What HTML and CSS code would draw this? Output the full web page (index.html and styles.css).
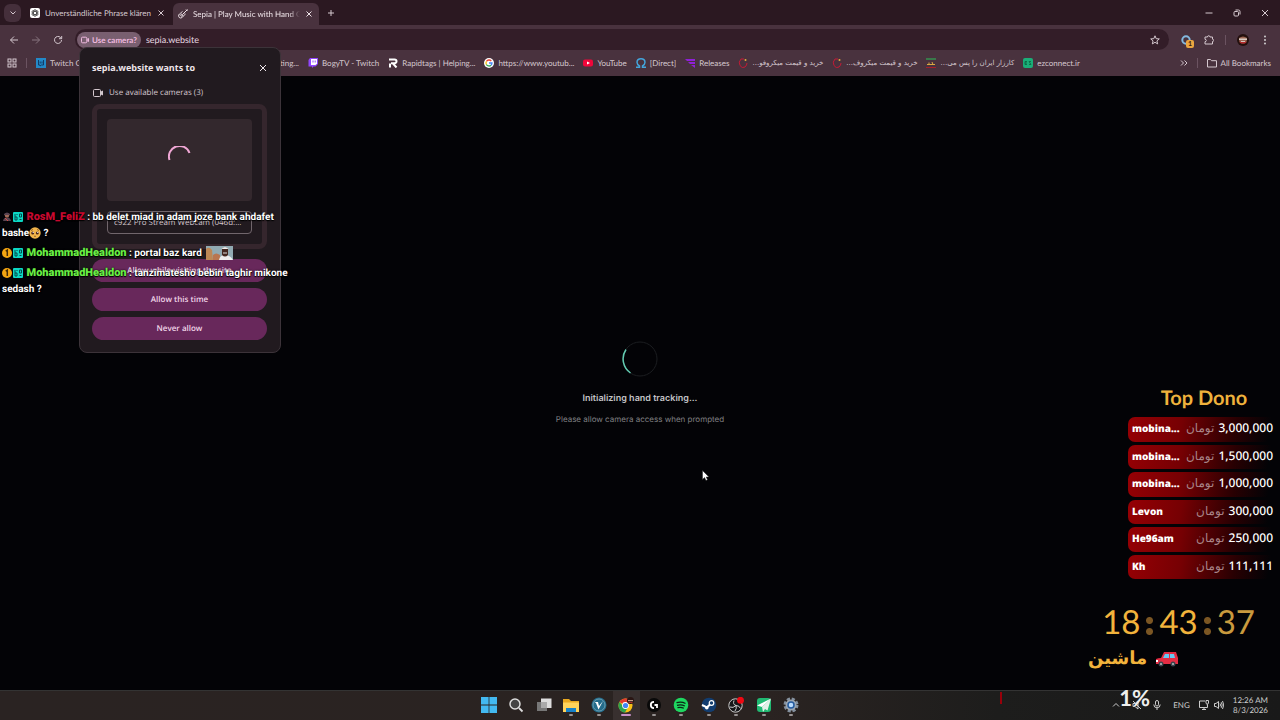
FILE: index.html
```
<!DOCTYPE html>
<html lang="en">
<head>
  <meta charset="UTF-8">
  <title>Sepia | Play Music with Hand Gestures</title>
  <link rel="stylesheet" href="styles.css">
</head>
<body>

  <!-- Tabs -->
  <header class="tabs">
    <button class="tab-search" aria-label="Search tabs"><svg class="ico8" viewBox="0 0 8 8"><path d="M1.5 2.5 4 5l2.500-2.500"/></svg></button>
    <div class="tab">
      <svg class="ico10" viewBox="0 0 10 10"><rect width="10" height="10" rx="2" fill="#fff" stroke="none"/><g stroke="#333" stroke-width=".7"><ellipse cx="5" cy="5" rx="1.600" ry="3.500"/><ellipse cx="5" cy="5" rx="1.600" ry="3.500" transform="rotate(60 5 5)"/><ellipse cx="5" cy="5" rx="1.600" ry="3.500" transform="rotate(120 5 5)"/></g></svg>
      <span>Unverständliche Phrase klären</span>
      <button aria-label="Close tab"><svg class="ico8" viewBox="0 0 8 8"><path d="m1.500 1.500 5 5m0-5-5 5"/></svg></button>
    </div>
    <div class="tab active">
      <svg class="ico10" viewBox="0 0 10 10"><path d="M9.500.5 5 5M8 .5l1.500 1.500M4.500 2.500C3 3 3 4.500 1.500 5c-1.500.8-1 4 1 4 2.500 0 2-2 3.500-2.500 1-.5 1-1 1-2"/><circle cx="3.700" cy="6.200" r="1"/></svg>
      <span class="fade">Sepia | Play Music with Hand Ge</span>
      <button aria-label="Close tab"><svg class="ico8" viewBox="0 0 8 8"><path d="m1.500 1.500 5 5m0-5-5 5"/></svg></button>
    </div>
    <button class="new-tab" aria-label="New tab"><svg class="ico8" viewBox="0 0 8 8"><path d="M4 1v6M1 4h6"/></svg></button>
    <div class="window-buttons">
      <button aria-label="Minimize"><svg class="ico8" viewBox="0 0 8 8"><path d="M.5 4h7"/></svg></button>
      <button aria-label="Restore"><svg class="ico8" viewBox="0 0 8 8"><rect x="1" y="2.500" width="4.500" height="4.500" rx="1"/><path d="M2.500 1h3Q7 1 7 2.500v3"/></svg></button>
      <button aria-label="Close"><svg class="ico8" viewBox="0 0 8 8"><path d="m1 1 6 6m0-6-6 6"/></svg></button>
    </div>
  </header>

  <!-- Toolbar -->
  <nav class="toolbar">
    <button aria-label="Back"><svg class="ico10" viewBox="0 0 10 10"><path d="M9 5H1.500M5 1.500 1.500 5 5 8.500"/></svg></button>
    <button class="dim" aria-label="Forward"><svg class="ico10" viewBox="0 0 10 10"><path d="M1 5h7.500M5 1.500 8.500 5 5 8.500"/></svg></button>
    <button aria-label="Reload"><svg class="ico10" viewBox="0 0 10 10"><path d="M8.500 5A3.500 3.500 0 1 1 7.400 2.400L8.500 3.500M8.700 1v2.700H6"/></svg></button>
    <div class="address">
      <button class="chip"><svg class="ico8" viewBox="0 0 8 8"><rect x=".5" y="1.200" width="5.300" height="5.600" rx="1"/><path d="m6 3.500 1.500-1v3L6 4.500"/></svg>Use camera?</button>
      <input type="text" value="sepia.website" aria-label="Address">
      <button aria-label="Bookmark this tab"><svg class="ico10" viewBox="0 0 10 10"><path d="m5 .8 1.200 2.900 3.100.2-2.400 2 .8 3L5 7.300 2.300 8.900l.8-3-2.400-2 3.100-.2z"/></svg></button>
    </div>
    <div class="extensions">
      <button class="ext" aria-label="Extension"><svg class="ico10" viewBox="0 0 10 10"><circle cx="5" cy="5" r="3.700" stroke="#83b9df" stroke-width="2"/></svg><b>1</b></button>
      <button aria-label="Extensions"><svg class="ico10" viewBox="0 0 10 10"><path d="M1 2h2.500q0-1.300 1.200-1.300T6 2h2.500v2.200q1.200.1 1.200 1.200T8.500 6.500V9H1V6.700q1.300 0 1.300-1.200T1 4.300z"/></svg></button>
      <i class="rule"></i>
      <button class="profile" aria-label="Profile"><svg viewBox="0 0 12 12"><circle cx="6" cy="6" r="6" fill="#23100e"/><path d="M2 4q4-3 8 0l-.5 4q-3.500 3-7 0z" fill="#9a6450"/><path d="M2 4.500h8v1.500H2z" fill="#d9cbc2"/><path d="M2.500 7.500q3.500 1 7 0L9 9q-3 1-6 0z" fill="#b52a2c"/><path d="M4 7h4v.7H4z" fill="#eee"/></svg></button>
      <button aria-label="Menu"><svg class="ico10" viewBox="0 0 10 10"><g fill="#ddd" stroke="none"><circle cx="5" cy="1.500" r=".9"/><circle cx="5" cy="5" r=".9"/><circle cx="5" cy="8.500" r=".9"/></g></svg></button>
    </div>
  </nav>

  <!-- Bookmarks -->
  <nav class="bookmarks">
    <button aria-label="Apps"><svg class="ico10" viewBox="0 0 10 10"><rect x="1" y="1" width="3" height="3"/><rect x="6" y="1" width="3" height="3"/><rect x="1" y="6" width="3" height="3"/><rect x="6" y="6" width="3" height="3"/></svg></button>
    <i class="rule"></i>
    <div class="links">
      <a class="wide" href="#"><svg class="ico10" viewBox="0 0 10 10"><rect width="10" height="10" fill="#2389c8" stroke="none"/><path d="M2.500 2v5h1.500v1L5.500 7h2V2M4.200 3.500v2M6 3.500v2" stroke="#123d68"/></svg><span>Twitch Creator Dash</span></a>
      <a class="wide" href="#"><svg class="ico10" viewBox="0 0 10 10"><circle cx="5" cy="5" r="4"/></svg><span>Stream Alert Setting...</span></a>
      <a href="#"><svg class="ico10" viewBox="0 0 10 10"><path d="M2 0h8v6L7.500 8.500H5.500L4 10V8.500H.5V2z" fill="#9146ff" stroke="none"/><path d="M3 1h6v4.500L7.500 7H3z" fill="#fff" stroke="none"/><path d="M5 2.500v2M7.200 2.500v2" stroke="#9146ff"/></svg><span>BogyTV - Twitch</span></a>
      <a href="#"><svg class="ico10" viewBox="0 0 10 10"><path d="M1 1.500h5.500q2 0 2 1.800T6.500 5.200H3M2 9.500V5.500M5 5.500l3.500 4" stroke="#fff" stroke-width="2"/></svg><span>Rapidtags | Helping...</span></a>
      <a href="#"><svg class="ico10" viewBox="0 0 10 10"><circle cx="5" cy="5" r="5" fill="#fff" stroke="none"/><g stroke-width="1.300"><path d="M2.500 3.400A3 3 0 0 1 7.300 3" stroke="#ea4335"/><path d="M2.500 3.300a3 3 0 0 0 0 3.400" stroke="#fbbc05"/><path d="M2.400 6.500A3 3 0 0 0 7 7.200" stroke="#34a853"/><path d="M5 5h3q0 1.500-1 2.300" stroke="#4285f4"/></g></svg><span>https://www.youtub...</span></a>
      <a href="#"><svg class="ico10" viewBox="0 0 10 10"><rect y="1.500" width="10" height="7" rx="2" fill="#f0063a" stroke="none"/><path d="m4 3.500 3 1.500-3 1.500z" fill="#fff" stroke="none"/></svg><span>YouTube</span></a>
      <a href="#"><svg class="ico10" viewBox="0 0 10 10"><path d="M0 9.200h3.500V8Q1 6.500 1 4.300 1.200.8 5 .8t4 3.500Q9 6.500 6.500 8v1.200H10" stroke="#43a5dc" stroke-width="1.500"/></svg><span>[Direct]</span></a>
      <a href="#"><svg class="ico10" viewBox="0 0 10 10"><path d="M0 1h10v2H2zM3 4h7v2H5zM6 7h4v3z" fill="#8f20d8" stroke="none"/></svg><span>Releases</span></a>
      <a href="#"><svg class="ico10" viewBox="0 0 10 10"><path d="M6 1H3Q0 4 2 7.500T7 9q2-2 2-4" stroke="#c41a35"/><circle cx="7.500" cy="2" r="1" fill="#e8ad3d" stroke="none"/></svg><span class="fa" dir="rtl">خرید و قیمت میکروفو...</span></a>
      <a href="#"><svg class="ico10" viewBox="0 0 10 10"><path d="M6 1H3Q0 4 2 7.500T7 9q2-2 2-4" stroke="#c41a35"/><circle cx="7.500" cy="2" r="1" fill="#e8ad3d" stroke="none"/></svg><span class="fa" dir="rtl">خرید و قیمت میکروف...</span></a>
      <a href="#"><svg class="ico10" viewBox="0 0 10 10"><path d="M0 0h10v2H0z" fill="#39784a" stroke="none"/><path d="M0 9h10v1H0z" fill="#a51f2c" stroke="none"/><path d="M1 6.500h8M3 4.500v2M6 4l1 2.500" stroke="#d9a941"/></svg><span class="fa" dir="rtl">کارزار ایران را پس می...</span></a>
      <a href="#"><svg class="ico10" viewBox="0 0 10 10"><rect width="10" height="10" rx="2" fill="#1aae78" stroke="none"/><path d="M4 3.500H2v3h2M2 5h2M8 3.500H6l2 3H6" stroke="#08613f" stroke-width=".8"/></svg><span>ezconnect.ir</span></a>
    </div>
    <button aria-label="More bookmarks"><svg class="ico8" viewBox="0 0 8 8"><path d="m1 1.500 2.500 2.500L1 6.500m3.500-5L7 4 4.500 6.500"/></svg></button>
    <i class="rule"></i>
    <a href="#"><svg class="ico10" viewBox="0 0 10 10"><path d="M.5 8V1.500h3l1 1.200h5V9h-9z"/></svg><span>All Bookmarks</span></a>
  </nav>

  <!-- Page -->
  <main class="page">
    <svg class="loader" viewBox="0 0 36 36"><circle cx="18" cy="18" r="17" stroke="#1b1d20"/><path d="M4 8.500A17 17 0 0 0 8.500 32" stroke="#63cbb1" stroke-width="1.500"/></svg>
    <h1>Initializing hand tracking...</h1>
    <p>Please allow camera access when prompted</p>
  </main>

  <!-- Taskbar -->
  <footer class="taskbar">
    <div class="apps">
      <button aria-label="Start"><svg viewBox="0 0 16 16"><path d="M0 0h7.600v7.600H0zM8.400 0H16v7.600H8.400zM0 8.400h7.600V16H0zM8.400 8.400H16V16H8.400z" fill="#43b9f0"/></svg></button>
      <button aria-label="Search"><svg viewBox="0 0 16 16"><circle cx="7" cy="7" r="5" fill="#444" stroke="#ddd" stroke-width="1.500"/><path d="m11 11 3.500 3.500" stroke="#ddd" stroke-width="1.800"/></svg></button>
      <button aria-label="Task view"><svg viewBox="0 0 16 16"><path d="M1 5h10v9H1z" fill="#777"/><path d="M5 1.500h10.500V11H5z" fill="#ddd"/><path d="M5 5h6v6H5z" fill="#aaa"/></svg></button>
      <button class="open" aria-label="File Explorer"><svg viewBox="0 0 16 16"><path d="M0 2h6l2 2h8v11H0z" fill="#e9a820"/><path d="M0 5.500h16V15H0z" fill="#ffd35b"/><path d="M3 11h10v4H3z" fill="#1782c9"/></svg></button>
      <button class="open" aria-label="V client"><svg viewBox="0 0 16 16"><circle cx="8" cy="8" r="7.500" fill="#246c8b"/><circle cx="8" cy="8" r="6" stroke="#82afbf" stroke-width=".7"/><path d="M3.500 5H7L8 9l4-5-4.500 8.500L5 6z" fill="#fff"/></svg></button>
      <button class="open current" aria-label="Chrome"><svg viewBox="0 0 16 16"><circle cx="7.500" cy="8.500" r="7" fill="#fbc116"/><path d="M7.500 8.500 1.400 5A7 7 0 0 1 13.600 5z" fill="#e33b2e"/><path d="M1.400 5A7 7 0 0 0 7 15.500L10 10 5 9z" fill="#2da44e"/><circle cx="7.500" cy="8.500" r="3.400" fill="#fff"/><circle cx="7.500" cy="8.500" r="2.600" fill="#4285f4"/><circle cx="12.500" cy="3.500" r="3.500" fill="#2a1614"/><path d="M10 3h5v1.200h-5z" fill="#c79a86"/><path d="M10.500 5h4v.9h-4z" fill="#b33"/></svg></button>
      <button class="open" aria-label="G Hub"><svg viewBox="0 0 16 16"><circle cx="8" cy="8" r="7" fill="#090909"/><path d="M8 4.800a3.200 3.200 0 1 0 0 6.400M8.500 8H11v3" stroke="#fff" stroke-width="1.800"/></svg></button>
      <button class="open" aria-label="Spotify"><svg viewBox="0 0 16 16"><circle cx="8" cy="8" r="7.300" fill="#1ed760"/><path d="M3.500 5.700q5-1.500 9 .8M4 8.300q4.200-1.200 7.800.7M4.500 10.700q3.500-.9 6.300.6" stroke="#0b2413" stroke-width="1.300"/></svg></button>
      <button class="open" aria-label="Steam"><svg viewBox="0 0 16 16"><circle cx="8" cy="8" r="7.300" fill="#123d70"/><circle cx="10.500" cy="6" r="2.300" stroke="#fff" stroke-width="1.200"/><path d="m1 8 5 2.300L9 7.500" stroke="#fff" stroke-width="2"/><circle cx="5.800" cy="10.800" r="1.800" fill="#fff"/></svg></button>
      <button class="open" aria-label="OBS"><svg viewBox="0 0 16 16"><circle cx="7.500" cy="8.500" r="6.700" fill="#171719" stroke="#ccc"/><path d="M6 3.500q-1.500 4 2 5 3.500 0 4.500 3M8 8.500q-3 3-6 1.500M8 8.500q1 3-1 5.500" stroke="#ccc"/><circle cx="12.500" cy="3.300" r="3.500" fill="#f00812"/></svg></button>
      <button class="open" aria-label="Send"><svg viewBox="0 0 16 16"><rect x="1" y="1" width="14" height="14" rx="3" fill="#20b972"/><path d="M15 1.500 1 8.500l5 1.500z" fill="#fff"/><path d="m15 1.500-9 8.500 1 5 2-3 2.500 1.500z" fill="#e3f0e8"/></svg></button>
      <button class="open" aria-label="Settings"><svg viewBox="0 0 16 16"><circle cx="8" cy="8" r="6" stroke="#84909d" stroke-width="3" stroke-dasharray="3 1.712"/><circle cx="8" cy="8" r="5.500" fill="#9aa5b1"/><circle cx="8" cy="8" r="3" fill="#b9dcff" stroke="#245b9f" stroke-width="1.500"/></svg></button>
    </div>
    <div class="tray">
      <button aria-label="Hidden icons"><svg class="ico8" viewBox="0 0 8 8"><path d="m1 5.500 3-3 3 3"/></svg></button>
      <svg class="ico10 muted" viewBox="0 0 10 10"><path d="M1 3.500h2L6 1v8L3 6.500H1zM1 1l8 8"/></svg>
      <svg class="ico10 mic" viewBox="0 0 10 10"><rect x="3.500" y=".5" width="3" height="5.500" rx="1.500"/><path d="M1.800 4.500q0 3.300 3.200 3.300t3.200-3.300M5 8v2"/></svg>
      <span class="lang">ENG</span>
      <svg class="ico10" viewBox="0 0 10 10"><path d="M6 1H.5v6.500h8V5M3 9.500h4M5 7.500v2M7 .5h2.500V3q0 1-1.200 1T7 3zM8.300 4v1.500"/></svg>
      <svg class="ico10" viewBox="0 0 10 10"><path d="M.5 3.500H2L4.500 1.500v7L2 6.500H.5zM6 3.500q1 1.500 0 3M7.200 2.200q2 2.800 0 5.600M8.500 1q2.500 4 0 8"/></svg>
      <time>12:26 AM<br>8/3/2026</time>
    </div>
  </footer>

  <!-- Camera permission -->
  <form class="permission">
    <div class="permission-head">
      <h2>sepia.website wants to</h2>
      <button type="button" class="close" aria-label="Close"><svg class="ico8" viewBox="0 0 8 8"><path d="m1 1 6 6m0-6-6 6"/></svg></button>
    </div>
    <label for="camera"><svg class="ico10" viewBox="0 0 10 10"><rect x=".5" y="1.500" width="7" height="7" rx="1"/><path d="m7.500 4.500 2-1.500v4l-2-1.500" fill="#ccc"/></svg>Use available cameras (3)</label>
    <div class="camera">
      <div class="preview"><svg viewBox="0 0 24 24"><path d="M1.500 14A10.500 10.500 0 0 1 21.500 7" stroke="#f0a7d5" stroke-width="2"/></svg></div>
      <select id="camera"><option>c922 Pro Stream Webcam (046d:...</option></select>
    </div>
    <button type="button">Allow while visiting the site</button>
    <button type="button">Allow this time</button>
    <button type="button">Never allow</button>
  </form>

  <!-- Stream chat -->
  <section class="chat">
    <p><svg class="badge" viewBox="0 0 10 10"><circle cx="5" cy="3.500" r="2.200" fill="#a26b58"/><path d="M2 2q3-3 6 0v1H2zM1 9q1-4 4-3 3-1 4 3z" fill="#594451"/><path d="m3 6 3 3" stroke="#d34a45"/></svg><svg class="badge" viewBox="0 0 10 10"><rect width="10" height="10" rx="1" fill="#0bd8c4"/><path d="M2 2v6h2V5H2M4 2v1M6.500 2v3h2V2zM6.500 7.500h2" stroke="#064a4d"/></svg> <b class="red">RosM_FeliZ</b> : bb delet miad in adam joze bank ahdafet bashe<svg class="emoji" viewBox="0 0 12 12"><circle cx="6" cy="6" r="5.700" fill="#f3b64b"/><circle cx="3.700" cy="6" r="1.500" fill="#4b281d"/><circle cx="8.300" cy="6" r="1.500" fill="#4b281d"/><circle cx="4.200" cy="5.400" r=".6" fill="#fff"/><circle cx="8.800" cy="5.400" r=".6" fill="#fff"/><path d="m2 3.500 2-1m6 1-2-1M5 9.500q1-1 2 0" stroke="#68401c" stroke-width=".7"/></svg> ?</p>
    <p><svg class="badge" viewBox="0 0 10 10"><circle cx="5" cy="5" r="5" fill="#f3a512"/><path d="M3.700 3.200 5.300 2.200V8" stroke="#442b05" stroke-width="1.500"/></svg><svg class="badge" viewBox="0 0 10 10"><rect width="10" height="10" rx="1" fill="#0bd8c4"/><path d="M2 2v6h2V5H2M4 2v1M6.500 2v3h2V2zM6.500 7.500h2" stroke="#064a4d"/></svg> <b class="green">MohammadHealdon</b> : portal baz kard <svg class="emote" viewBox="0 0 27 14"><path d="M0 0h27v14H0z" fill="#91aab2"/><path d="M0 3q3-3 6 1l1 10H0z" fill="#bd8755"/><path d="M7 9q3-3 7 0v5H7z" fill="#b97650"/><path d="M13 14q1-5 6-5t8 5z" fill="#eee"/><path d="M16 3q3-4 6 0v6q-3 3-6 0z" fill="#442820"/><path d="M15.500 3q3.500-4 7 0z" fill="#eee"/><path d="M17 7h4" stroke="#ddd"/></svg></p>
    <p><svg class="badge" viewBox="0 0 10 10"><circle cx="5" cy="5" r="5" fill="#f3a512"/><path d="M3.700 3.200 5.300 2.200V8" stroke="#442b05" stroke-width="1.500"/></svg><svg class="badge" viewBox="0 0 10 10"><rect width="10" height="10" rx="1" fill="#0bd8c4"/><path d="M2 2v6h2V5H2M4 2v1M6.500 2v3h2V2zM6.500 7.500h2" stroke="#064a4d"/></svg> <b class="green">MohammadHealdon</b> : tanzimatesho bebin taghir mikone sedash ?</p>
  </section>

  <!-- Donations and timer -->
  <aside class="dono">
    <h2>Top Dono</h2>
    <ol>
      <li><b>mobina...</b><span>تومان</span><em>3,000,000</em></li>
      <li><b>mobina...</b><span>تومان</span><em>1,500,000</em></li>
      <li><b>mobina...</b><span>تومان</span><em>1,000,000</em></li>
      <li><b>Levon</b><span>تومان</span><em>300,000</em></li>
      <li><b>He96am</b><span>تومان</span><em>250,000</em></li>
      <li><b>Kh</b><span>تومان</span><em>111,111</em></li>
    </ol>
  </aside>
  <aside class="timer">
    <div class="clock"><span>18</span><i></i><span>43</span><i></i><span>37</span></div>
    <div class="goal"><span>ماشین</span><svg viewBox="0 0 24 16"><path d="M1 8q2-1 5-1l3-6h12l2 6v6H1z" fill="#e32c43"/><path d="m8 7 2-4h4v4zM15 3h4l1 4h-5z" fill="#67c8f2"/><circle cx="6" cy="13" r="2.500" fill="#39444e"/><circle cx="18" cy="13" r="2.500" fill="#39444e"/><circle cx="6" cy="13" r="1" fill="#bbb"/><circle cx="18" cy="13" r="1" fill="#bbb"/><path d="M1 9h2v2H1z" fill="#fff"/></svg></div>
  </aside>
  <div class="progress"><i></i><span>1%</span></div>

  <svg class="cursor" viewBox="0 0 8 12"><path d="M.5.500v9l2-2 1.500 3 1.500-.7L4.200 7H7z" fill="#fff" stroke="#222" stroke-width=".5"/></svg>

</body>
</html>
```
FILE: styles.css
```
* {
  box-sizing: border-box;
}

body {
  margin: 0;
  height: 100vh;
  display: flex;
  flex-direction: column;
  position: relative;
  overflow: hidden;
  background: #030306;
  color: #d5c8cf;
  font: 9px/12px Lato, "DejaVu Sans", sans-serif;
  text-rendering: geometricPrecision;
}

h1, h2, p, ol {
  margin: 0;
  padding: 0;
}

button, input, select {
  font: inherit;
  color: inherit;
  background: none;
  border: 0;
  padding: 0;
  text-rendering: inherit;
}

a {
  color: inherit;
  text-decoration: none;
}

svg {
  fill: none;
  flex: none;
}

.ico8 {
  width: 8px;
  height: 8px;
  stroke: currentColor;
  display: block;
}

.ico10 {
  width: 10px;
  height: 10px;
  stroke: currentColor;
  display: block;
}

.rule {
  width: 1px;
  height: 10px;
  background: #6b5361;
}

/* tabs */
.tabs {
  height: 25px;
  flex: none;
  display: flex;
  align-items: center;
  padding-left: 4px;
  background: #2b1821;
}

.tab-search {
  width: 17px;
  height: 18px;
  margin-right: 4px;
  border-radius: 6px;
  background: #452f3b;
  display: grid;
  place-items: center;
}

.tab {
  width: 148px;
  height: 22px;
  display: flex;
  align-items: center;
  gap: 5px;
  padding: 0 8px 0 5px;
  font-size: 8px;
  white-space: nowrap;
}

.tab span {
  flex: 1;
  overflow: hidden;
}

.tab.active {
  width: 146px;
  align-self: flex-end;
  padding-right: 6px;
  background: #49323e;
  border-radius: 6px 6px 0 0;
  color: #eee3e8;
}

.tab .fade {
  mask-image: linear-gradient(90deg, #000 90%, transparent);
}

.new-tab {
  margin-left: 8px;
}

.window-buttons {
  margin-left: auto;
  display: flex;
  gap: 20px;
  padding-right: 11px;
}

/* toolbar */
.toolbar {
  height: 27px;
  flex: none;
  display: flex;
  align-items: center;
  gap: 12px;
  padding: 2px 10px 0 9px;
  background: #49323e;
}

.dim {
  opacity: .45;
}

.address {
  flex: 1;
  height: 21px;
  display: flex;
  align-items: center;
  gap: 5px;
  padding: 0 9px 0 2px;
  border-radius: 11px;
  background: #331d28;
}

.address input {
  flex: 1;
  min-width: 0;
  outline: none;
  color: #e6d9e0;
}

.chip {
  height: 16px;
  display: flex;
  align-items: center;
  gap: 3px;
  padding: 0 4px;
  border-radius: 8px;
  background: #795f70;
  color: #efb9df;
  font-size: 8px;
  font-weight: 700;
}

.extensions {
  display: flex;
  align-items: center;
  gap: 11px;
}

.ext {
  position: relative;
  margin-right: 2px;
}

.ext b {
  position: absolute;
  left: 5px;
  top: 5px;
  width: 8px;
  height: 8px;
  border-radius: 2px;
  background: #eba640;
  color: #38200d;
  font-size: 7px;
  line-height: 8px;
}

.profile svg {
  width: 12px;
  height: 12px;
  display: block;
}

/* bookmarks */
.bookmarks {
  height: 24px;
  flex: none;
  display: flex;
  align-items: center;
  gap: 9px;
  padding: 0 9px 2px 7px;
  background: #49323e;
  font-size: 8px;
  white-space: nowrap;
}

.bookmarks a {
  display: flex;
  align-items: center;
  gap: 4px;
}

.bookmarks .fa {
  font-family: "DejaVu Sans", sans-serif;
  font-size: 7px;
}

.links {
  flex: 1;
  display: flex;
  gap: 9px;
  overflow: hidden;
}

.links .wide {
  width: 127px;
  justify-content: space-between;
}

.links .wide:first-child {
  justify-content: flex-start;
}

/* page */
.page {
  flex: 1;
  display: flex;
  flex-direction: column;
  align-items: center;
  justify-content: center;
  padding-top: 1px;
  font-family: Inter, sans-serif;
}

.loader {
  width: 36px;
  height: 36px;
  margin-bottom: 14px;
}

.page h1 {
  font-size: 9px;
  line-height: 16px;
  font-weight: 600;
  color: #c2c2c5;
}

.page p {
  margin-top: 4px;
  font-size: 8px;
  line-height: 16px;
  color: #818184;
}

/* taskbar */
.taskbar {
  height: 30px;
  flex: none;
  position: relative;
  display: flex;
  justify-content: center;
  background: linear-gradient(90deg, #2a2322, #2a2321 60%, #1d1d1c 78%, #191919);
  border-top: 1px solid #333;
}

.apps {
  width: 330px;
  display: grid;
  grid-template-columns: repeat(12, 1fr);
}

.apps button {
  display: flex;
  flex-direction: column;
  align-items: center;
  padding-top: 6px;
}

.apps svg {
  width: 16px;
  height: 16px;
}

.apps .open::after {
  content: "";
  width: 4px;
  height: 2px;
  margin-top: 1px;
  border-radius: 1px;
  background: #969292;
}

.apps .current {
  background: #38302f;
}

.apps .current::after {
  width: 10px;
  background: #c78fc9;
}

.tray {
  position: absolute;
  right: 12px;
  top: 0;
  height: 28px;
  display: flex;
  align-items: center;
  gap: 5px;
  color: #ccc;
  font-size: 8px;
}

.tray time {
  margin-left: 4px;
  text-align: right;
  line-height: 10px;
}

.muted {
  margin-left: 7px;
}

.mic {
  margin-left: 5px;
}

.lang {
  margin: 0 4px 0 6px;
}

/* camera permission */
.permission {
  position: absolute;
  left: 79px;
  top: 47px;
  width: 202px;
  padding: 14px 13px 12px 12px;
  display: flex;
  flex-direction: column;
  background: #211a1f;
  border: 1px solid #3c3339;
  border-radius: 8px;
  font-family: "Open Sans", sans-serif;
}

.permission-head {
  display: flex;
  justify-content: space-between;
  align-items: center;
  color: #eee5ea;
}

.permission h2 {
  font-size: 9px;
  line-height: 12px;
  font-weight: 700;
}

.permission label {
  display: flex;
  align-items: center;
  gap: 6px;
  margin: 12px 0 4px 1px;
  font-size: 8px;
  line-height: 14px;
}

.camera {
  padding: 10px;
  border: 5px solid #35262d;
  border-radius: 8px;
  margin-bottom: 4px;
}

.preview {
  height: 82px;
  display: grid;
  place-items: center;
  border-radius: 4px;
  background: #33282d;
}

.preview svg {
  width: 24px;
  height: 24px;
  margin-bottom: 4px;
}

.camera select {
  display: block;
  width: 100%;
  height: 23px;
  margin-top: 10px;
  padding: 0 6px;
  border: 1px solid #71666c;
  border-radius: 4px;
  appearance: none;
  font-size: 8px;
}

.permission > button {
  height: 23px;
  margin-top: 6px;
  border-radius: 12px;
  background: #68285b;
  color: #f1d5e8;
  font-size: 8px;
  font-weight: 600;
}

/* stream chat */
.chat {
  position: absolute;
  left: 2px;
  top: 209px;
  width: 300px;
  display: grid;
  gap: 3px;
  color: #fff;
  font: 700 10px/16px Roboto, sans-serif;
  text-shadow: 0 0 2px #000, 0 1px 1px #000;
}

.chat b {
  font-size: 11px;
}

.badge {
  width: 10px;
  height: 10px;
  margin-right: 1px;
  vertical-align: -2px;
}

.emoji {
  width: 12px;
  height: 12px;
  vertical-align: -3px;
}

.emote {
  width: 27px;
  height: 14px;
  margin-left: 2px;
  vertical-align: -4px;
}

.red {
  color: #c9082f;
}

.green {
  color: #69f044;
}

/* donations */
.dono {
  position: absolute;
  right: 0;
  top: 386px;
  width: 152px;
}

.dono h2 {
  color: #efb23c;
  font: 700 20px/25px Lato, sans-serif;
  text-align: center;
}

.dono ol {
  height: 162px;
  margin-top: 6px;
  display: grid;
  grid-auto-rows: 1fr;
  gap: 3px;
  list-style: none;
}

.dono li {
  display: flex;
  align-items: center;
  gap: 4px;
  padding: 0 7px 2px 4px;
  border-radius: 7px;
  background: linear-gradient(100deg, #960004, #760003 35%, #280002 70%, #030306 92%);
  color: #fff;
  font: 700 10px/16px "Noto Sans", "DejaVu Sans", sans-serif;
}

.dono li span {
  margin-left: auto;
  color: #a98589;
  font-size: 12px;
  font-weight: 400;
}

.dono em {
  font-size: 12px;
  font-style: normal;
  font-weight: 500;
}

/* timer */
.timer {
  position: absolute;
  right: 25px;
  top: 602px;
  width: 167px;
  color: #f2b33c;
}

.clock {
  display: flex;
  align-items: center;
  justify-content: flex-end;
  gap: 6px;
  font: 400 33px/40px Lato, sans-serif;
}

.clock i {
  width: 7px;
  height: 22px;
  margin-top: 8px;
  background: radial-gradient(circle, #7b5623 3px, transparent 4px) 0 0 / 7px 11px;
}

.clock span:last-child {
  color: #c99a3e;
}

.goal {
  display: flex;
  align-items: center;
  gap: 8px;
  font: 700 18px/34px "DejaVu Sans", sans-serif;
}

.goal svg {
  width: 24px;
  height: 16px;
}

.progress {
  position: absolute;
  right: 130px;
  top: 684px;
  width: 150px;
  display: flex;
  align-items: center;
  justify-content: space-between;
  color: #eee;
  font: 700 22px/28px Lato, sans-serif;
}

.progress i {
  width: 2px;
  height: 12px;
  background: #98000a;
}

.cursor {
  position: absolute;
  left: 702px;
  top: 470px;
  width: 8px;
  height: 12px;
}
```
